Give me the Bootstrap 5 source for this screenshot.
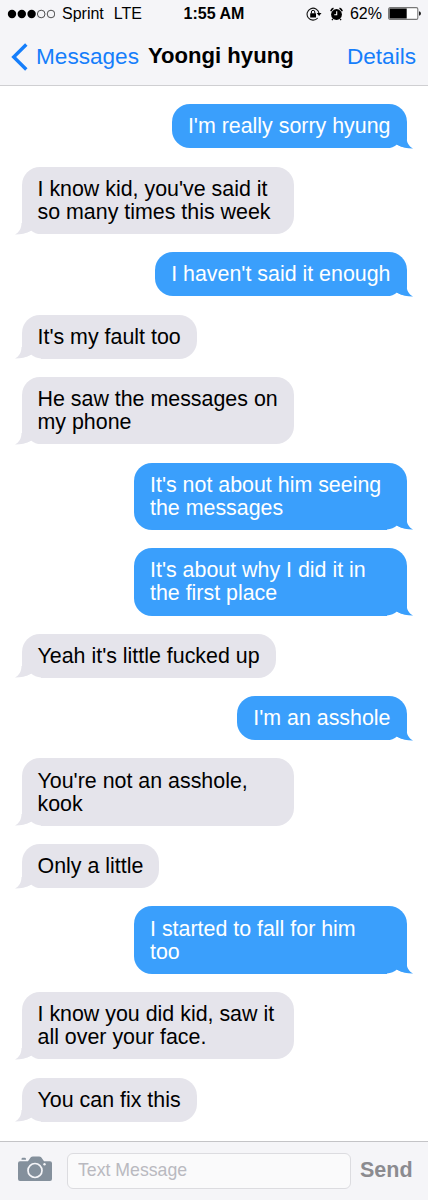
<!DOCTYPE html>
<html lang="en">
<head>
<meta charset="utf-8">
<meta name="viewport" content="width=device-width, initial-scale=1">
<title>Messages</title>
<link href="https://cdn.jsdelivr.net/npm/bootstrap@5.3.0/dist/css/bootstrap.min.css" rel="stylesheet">
<script src="https://cdn.jsdelivr.net/npm/bootstrap@5.3.0/dist/js/bootstrap.bundle.min.js" defer></script>
<style>
body { font-family: "Liberation Sans", Arial, sans-serif; color: #000; background: #fff; height: 1200px; overflow: hidden; }
.topbar { background: #f5f5f8; height: 86px; border-bottom: 1.5px solid #cfcfd2; }
.status { height: 27px; font-size: 16px; line-height: 27px; display: grid; grid-template-columns: 1fr auto 1fr; padding: 0 7px 0 7px; }
.carrier { margin-left: 7px; }
.network { margin-left: 10px; }
.percent { margin: 0 6px 0 7px; }
.titles { height: 59px; line-height: 59px; font-size: 22.6px; padding: 0 12px 0 11px; display: grid; grid-template-columns: 137px 1fr auto; }
.titles .name { font-size: 22.1px; font-weight: 700; margin-top: -1px; }
.titles a { color: #157efb; text-decoration: none; }
.thread { padding: 18.3px 21.5px 0; gap: 18.2px; }
.bubble { position: relative; max-width: 272.5px; padding: 11.1px 16px 9.9px; border-radius: 18px; font-size: 21.4px; line-height: 23.2px; white-space: nowrap; }
.them { align-self: flex-start; background: #e5e4eb; border-bottom-left-radius: 9px; }
.me { align-self: flex-end; background: #3a9ffc; color: #fff; border-bottom-right-radius: 9px; }
.wide { width: 272.5px; }
.tail { position: absolute; bottom: -.5px; width: 27px; height: 12px; fill: #e5e4eb; left: -6.5px; }
.me .tail { left: auto; right: -6.5px; fill: #3a9ffc; transform: scaleX(-1); }
.cut { fill: #fff; }
.composer { height: 59px; background: #f5f5f8; border-top: 1.5px solid #c4c4c7; padding: 0 14px 0 18px; }
.field { width: 284px; height: 36px; border: 1.5px solid #dcdce0; border-radius: 6px; background: #fafafb; font-size: 17.7px; padding: 0 10px 2px; margin-left: 15px; }
.field::placeholder { color: #b9b9c0; opacity: 1; }
.send { color: #8b8b90; font-size: 21.5px; font-weight: 700; line-height: 1; margin-left: 9px; }
</style>
</head>
<body class="d-flex flex-column">
<header class="topbar flex-shrink-0">
  <div class="status">
    <div class="d-flex align-items-center">
      <svg width="48" height="10" viewBox="0 0 48 10"><g><circle cx="5" cy="5" r="4.2"/><circle cx="14.8" cy="5" r="4.2"/><circle cx="24.6" cy="5" r="4.2"/></g><g fill="none" stroke="#222" stroke-width=".8"><circle cx="34.2" cy="5" r="3.8"/><circle cx="44" cy="5" r="3.8"/></g></svg>
      <span class="carrier">Sprint</span><span class="network">LTE</span>
    </div>
    <div class="fw-bold">1:55 AM</div>
    <div class="d-flex align-items-center justify-content-end">
      <svg width="16" height="14" viewBox="0 0 16 14"><path d="M11.7 11A6 6 0 1 1 13 6.2" fill="none" stroke="#111" stroke-width="1.1"/><path d="M10.7 6h4.8l-2.4 3z"/><rect x="4.2" y="6.2" width="5.8" height="4.4" rx=".4"/><path d="M5.4 6.5V5a1.7 1.7 0 0 1 3.4 0v1.5" fill="none" stroke="#000"/></svg>
      <svg class="ms-2" width="13" height="14" viewBox="0 0 13 14"><circle cx="6.5" cy="7.5" r="5.4"/><path d="M.8 4.2Q1.4 2 3.5 1.2M9.500 1.200q2.100.8 2.700 3" fill="none" stroke="#000" stroke-width="1.5"/><path d="M2.900 11.800l-1 1.300M10.100 11.800l1 1.300" stroke="#000" stroke-width="1.2"/><path d="M6.700 4.300v3.500H4.300" fill="none" stroke="#fff" stroke-width="1.1"/></svg>
      <span class="percent">62%</span>
      <svg width="33" height="13" viewBox="0 0 33 13"><rect x=".6" y=".6" width="29.2" height="11.8" rx="1.5" fill="#fff" stroke="#777" stroke-width="1.1"/><rect x="1.5" y="1.5" width="17.2" height="10"/><path d="M31 4.3q2 .4 2 2.2t-2 2.2z" fill="#222"/></svg>
    </div>
  </div>
  <div class="titles">
    <a href="#" class="d-flex align-items-center"><svg width="17" height="28" viewBox="0 0 17 28"><path d="M15.3 1.5 2.7 14l12.6 12.5" fill="none" stroke="#157efb" stroke-width="3.4"/></svg><span class="ms-2">Messages</span></a>
    <div class="name">Yoongi hyung</div>
    <a href="#">Details</a>
  </div>
</header>

<svg class="d-none"><symbol id="tail" viewBox="0 0 27 12"><path class="cut" d="M0 12V11.500Q9 11.500 16 7.600 20 11 26 11.500V12z"/><path d="M6.500 0H16V7.800C11 10.500 5 11.700 0 11.600 4.500 9 6.500 5 6.500 0z"/></symbol></svg>

<main class="thread d-flex flex-column flex-grow-1">
  <div class="bubble me">I'm really sorry hyung<svg class="tail"><use href="#tail"/></svg></div>
  <div class="bubble them wide">I know kid, you've said it<br>so many times this week<svg class="tail"><use href="#tail"/></svg></div>
  <div class="bubble me">I haven't said it enough<svg class="tail"><use href="#tail"/></svg></div>
  <div class="bubble them">It's my fault too<svg class="tail"><use href="#tail"/></svg></div>
  <div class="bubble them wide">He saw the messages on<br>my phone<svg class="tail"><use href="#tail"/></svg></div>
  <div class="bubble me wide">It's not about him seeing<br>the messages<svg class="tail"><use href="#tail"/></svg></div>
  <div class="bubble me wide">It's about why I did it in<br>the first place<svg class="tail"><use href="#tail"/></svg></div>
  <div class="bubble them">Yeah it's little fucked up<svg class="tail"><use href="#tail"/></svg></div>
  <div class="bubble me">I'm an asshole<svg class="tail"><use href="#tail"/></svg></div>
  <div class="bubble them wide">You're not an asshole,<br>kook<svg class="tail"><use href="#tail"/></svg></div>
  <div class="bubble them">Only a little<svg class="tail"><use href="#tail"/></svg></div>
  <div class="bubble me wide">I started to fall for him<br>too<svg class="tail"><use href="#tail"/></svg></div>
  <div class="bubble them wide">I know you did kid, saw it<br>all over your face.<svg class="tail"><use href="#tail"/></svg></div>
  <div class="bubble them">You can fix this<svg class="tail"><use href="#tail"/></svg></div>
</main>

<footer class="composer d-flex align-items-center flex-shrink-0">
  <svg class="mb-1" width="34" height="26" viewBox="0 0 34 26"><path fill="#84909c" d="M2 5.200h8l2.600-3.600Q13.500.5 15 .5h6q1.500 0 2.400 1.100L26 5.200h6q2 0 2 2V23q0 2-2 2H2q-2 0-2-2V7.200q0-2 2-2zM3.500 3.200Q3.500 1.800 4.700 1.800h2Q8 1.800 8 3.200v.5H3.500z"/><circle cx="17" cy="14.5" r="7" fill="none" stroke="#f5f5f8" stroke-width="1.7"/><circle cx="26.5" cy="8.3" r="1.2" fill="#f5f5f8"/></svg>
  <input class="field" type="text" placeholder="Text Message" aria-label="Text Message">
  <span class="send">Send</span>
</footer>
</body>
</html>
